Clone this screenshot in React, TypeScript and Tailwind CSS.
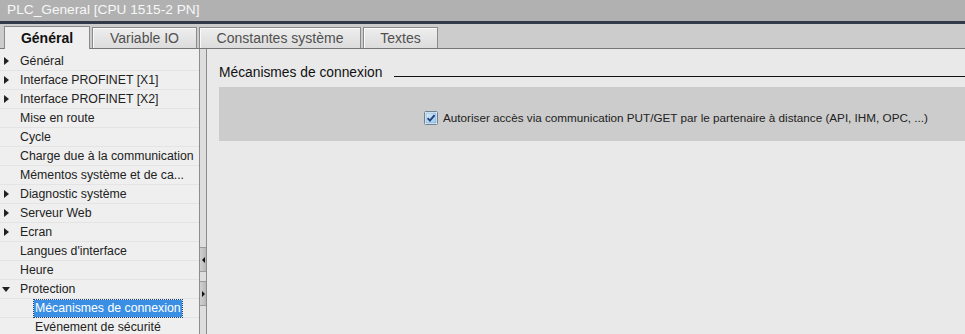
import React from 'react';

type TreeItem = { label: string; arrow?: 'right' | 'down'; indent?: boolean; selected?: boolean };

const items: TreeItem[] = [
  { label: 'Général', arrow: 'right' },
  { label: 'Interface PROFINET [X1]', arrow: 'right' },
  { label: 'Interface PROFINET [X2]', arrow: 'right' },
  { label: 'Mise en route' },
  { label: 'Cycle' },
  { label: 'Charge due à la communication' },
  { label: 'Mémentos système et de ca...' },
  { label: 'Diagnostic système', arrow: 'right' },
  { label: 'Serveur Web', arrow: 'right' },
  { label: 'Ecran', arrow: 'right' },
  { label: "Langues d'interface" },
  { label: 'Heure' },
  { label: 'Protection', arrow: 'down' },
  { label: 'Mécanismes de connexion', indent: true, selected: true },
  { label: 'Evénement de sécurité', indent: true },
];

const tabs = [
  { label: 'Général', w: 'w-[86px]', active: true },
  { label: 'Variable IO', w: 'w-[105px]' },
  { label: 'Constantes système', w: 'w-[162px]' },
  { label: 'Textes', w: 'w-[75px]' },
];

function Arrow({ dir }: { dir: 'right' | 'down' }) {
  if (dir === 'down') {
    return (
      <svg width="8" height="5" viewBox="0 0 8 5" className="mt-[1px]">
        <path d="M0 0 L8 0 L4 5 Z" fill="#222" />
      </svg>
    );
  }
  return (
    <svg width="5" height="8" viewBox="0 0 5 8">
      <path d="M0 0 L5 4 L0 8 Z" fill="#222" />
    </svg>
  );
}

function Checkbox() {
  return (
    <svg width="14" height="14" viewBox="0 0 14 14">
      <defs>
        <linearGradient id="cb" x1="0" y1="0" x2="1" y2="1">
          <stop offset="0" stopColor="#d9ecfb" />
          <stop offset="1" stopColor="#9cc7ea" />
        </linearGradient>
      </defs>
      <rect x="0.5" y="0.5" width="13" height="13" rx="1" fill="#f4f4f4" stroke="#6f8396" />
      <rect x="2" y="2" width="10" height="10" fill="url(#cb)" stroke="#7aa7cf" strokeWidth="0.6" />
      <path d="M3.6 7.2 L5.9 9.6 L10.6 4.2" fill="none" stroke="#1f3f7e" strokeWidth="1.9" />
    </svg>
  );
}

export default function App() {
  return (
    <div className="flex h-[334px] w-[965px] flex-col overflow-hidden bg-[#e9e9e9] font-['Liberation_Sans',sans-serif]">
      <div className="flex h-[21px] shrink-0 items-center bg-[#b1b1b1] pl-[7px] text-[13.7px] text-[#f7f7f7]">
        PLC_General [CPU 1515-2 PN]
      </div>
      <div className="h-[3px] shrink-0 bg-[#323a4a]" />
      <div className="flex h-[25px] shrink-0 items-end gap-[2px] border-b border-[#777] bg-[#cccccc] pl-[4px]">
        {tabs.map((t) =>
          t.active ? (
            <div
              key={t.label}
              className={`${t.w} -mb-px flex h-[23px] items-center justify-center border border-b-0 border-[#8a8a8a] bg-[#efefef] text-[14px] font-bold text-[#111]`}
            >
              {t.label}
            </div>
          ) : (
            <div
              key={t.label}
              className={`${t.w} flex h-[21px] items-center justify-center border border-b-0 border-[#8a8a8a] bg-gradient-to-b from-[#eeeeee] to-[#dcdcdc] text-[14px] text-[#505050] shadow-[inset_1px_1px_0_#fafafa]`}
            >
              {t.label}
            </div>
          ),
        )}
      </div>
      <div className="flex min-h-0 flex-1">
        <div className="w-[199px] shrink-0 bg-[#efefef] pt-[3px] text-[12.3px] text-[#222]">
          {items.map((it) => (
            <div key={it.label} className="flex h-[19px] items-center border-b border-[#e4e4e4]">
              <div className="flex w-[20px] shrink-0 justify-center pr-[8px]">
                {it.arrow && <Arrow dir={it.arrow} />}
              </div>
              {it.indent ? (
                <span
                  className={`ml-[14px] whitespace-nowrap px-[1px] leading-[17px] ${
                    it.selected ? 'bg-[#3a8fe4] text-white outline-1 outline-dotted outline-[#1c3f7a]' : ''
                  }`}
                >
                  {it.label}
                </span>
              ) : (
                <span className="whitespace-nowrap">{it.label}</span>
              )}
            </div>
          ))}
        </div>
        <div className="flex w-[8px] shrink-0 flex-col border-x border-[#8c8c8c] bg-[#dedede]">
          <div className="h-[198px] shrink-0" />
          <div className="flex h-[25px] shrink-0 items-center justify-center border-y border-[#9a9a9a] bg-gradient-to-r from-[#d0d0d0] to-[#b8b8b8]">
            <svg width="3" height="6" viewBox="0 0 3 6">
              <path d="M3 0 L0 3 L3 6 Z" fill="#111" />
            </svg>
          </div>
          <div className="h-[9px] shrink-0" />
          <div className="flex h-[25px] shrink-0 items-center justify-center border-y border-[#9a9a9a] bg-gradient-to-r from-[#d0d0d0] to-[#b8b8b8]">
            <svg width="3" height="6" viewBox="0 0 3 6">
              <path d="M0 0 L3 3 L0 6 Z" fill="#111" />
            </svg>
          </div>
        </div>
        <div className="flex-1 pl-[12px] pt-[14px]">
          <div className="flex h-[20px] items-center text-[13.8px] text-[#111]">
            <span className="whitespace-nowrap">Mécanismes de connexion</span>
            <div className="ml-[12px] mt-[6px] h-px flex-1 bg-[#111]" />
          </div>
          <div className="mt-[4px] flex h-[54px] items-center bg-[#cccccc] pl-[205px] pt-[8px]">
            <Checkbox />
            <span className="ml-[5px] whitespace-nowrap text-[11.7px] text-[#222]">
              Autoriser accès via communication PUT/GET par le partenaire à distance (API, IHM, OPC, ...)
            </span>
          </div>
        </div>
      </div>
    </div>
  );
}
